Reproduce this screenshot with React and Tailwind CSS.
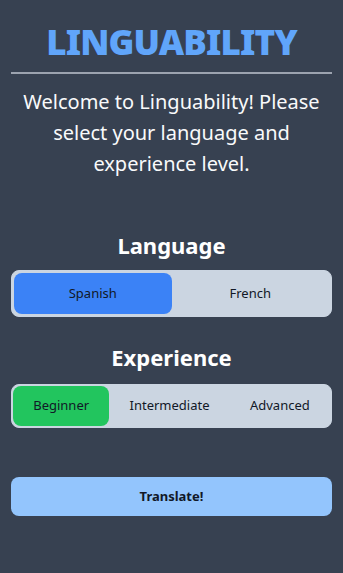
export default function App() {
  return (
    <div className="min-h-screen bg-[#374151] px-[11px] pt-[22px] text-white font-['Noto_Sans',sans-serif]">
      <h1 className="text-center text-[35px] font-black leading-[40px] tracking-tight text-[#60a5fa]">
        LINGUABILITY
      </h1>
      <hr className="mt-[10px] border-t-2 border-[#9ca3af]" />
      <p className="mt-[12px] px-3 text-center text-[20px] leading-[31px] text-[#f9fafb]">
        Welcome to Linguability! Please select your language and experience level.
      </p>

      <h2 className="mt-[50px] text-center text-[22px] font-bold leading-[32px]">Language</h2>
      <div className="mt-[9px] flex rounded-lg border border-[#cbd5e1] bg-[#cbd5e1] p-[2px]">
        <button className="h-[41px] flex-1 rounded-lg bg-[#3b82f6] text-[13px] text-[#111827]">
          Spanish
        </button>
        <button className="h-[41px] flex-1 rounded-lg text-[13px] text-[#111827]">French</button>
      </div>

      <h2 className="mt-[24px] text-center text-[22px] font-bold leading-[32px]">Experience</h2>
      <div className="mt-[11px] flex rounded-lg border border-[#cbd5e1] bg-[#cbd5e1] p-[1px]">
        <button className="h-[40px] flex-auto rounded-lg bg-[#22c55e] px-4 text-[13px] text-[#111827]">
          Beginner
        </button>
        <button className="h-[40px] flex-auto rounded-lg px-4 text-[13px] text-[#111827]">
          Intermediate
        </button>
        <button className="h-[40px] flex-auto rounded-lg px-4 text-[13px] text-[#111827]">
          Advanced
        </button>
      </div>

      <button className="mt-[49px] h-[39px] w-full rounded-lg bg-[#93c5fd] text-[13px] font-bold text-[#111827]">
        Translate!
      </button>
    </div>
  );
}
